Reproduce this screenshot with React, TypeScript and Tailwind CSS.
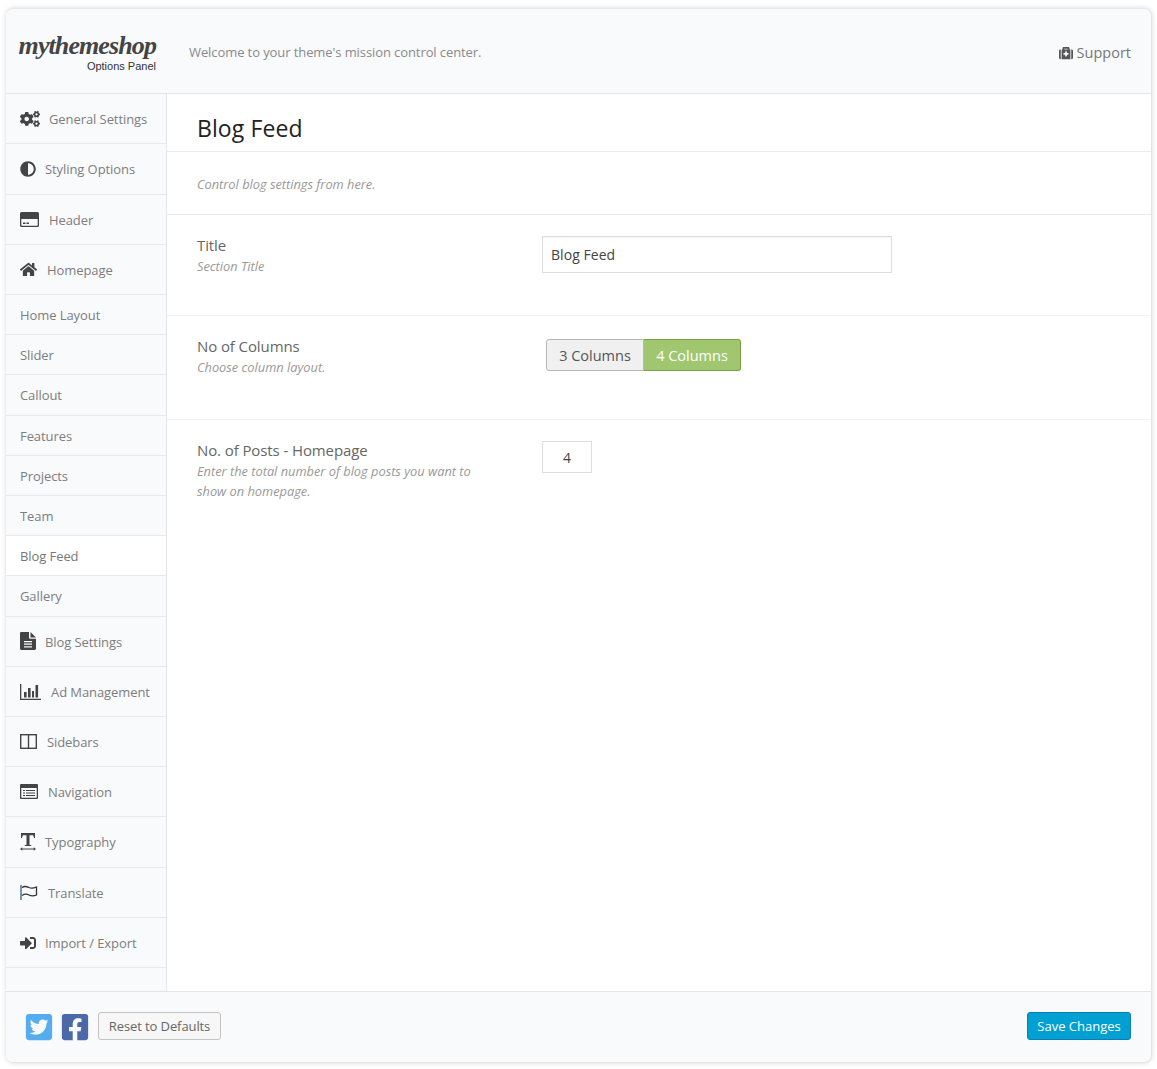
import type { ReactNode } from "react";
import { FaAdjust, FaCogs, FaFacebookSquare, FaHome, FaMedkit, FaSignInAlt, FaTwitterSquare } from "react-icons/fa";

function CardIcon() {
  return (
    <svg width="19" height="15" viewBox="0 0 19 15" fill="#444">
      <path d="M1.500 0h16A1.500 1.500 0 0 1 19 1.500v12a1.500 1.500 0 0 1-1.500 1.500h-16A1.500 1.500 0 0 1 0 13.500v-12A1.500 1.500 0 0 1 1.500 0zM1.300 7v6.300c0 .2.200.4.400.4h15.600c.2 0 .4-.2.400-.4V7z" fillRule="evenodd" />
      <path d="M3 10.500h2.500V12H3zM6.500 10.500H9V12H6.500z" />
    </svg>
  );
}

function DocIcon() {
  return (
    <svg width="16" height="18" viewBox="0 0 16 18" fill="#444">
      <path fillRule="evenodd" d="M0 1.200C0 .5.500 0 1.200 0H9v5.500c0 .8.500 1.300 1.300 1.300H16v10c0 .7-.5 1.200-1.200 1.200H1.200C.5 18 0 17.500 0 16.800zM4 9v1.200h8V9zm0 2.600v1.200h8v-1.200zm0 2.600v1.200h8v-1.200z" />
      <path d="M10.500 0 16 5.400h-5.500z" />
    </svg>
  );
}

function BarsIcon() {
  return (
    <svg width="21" height="16" viewBox="0 0 21 16" fill="#444">
      <path d="M0 0h1.300v14.700H21V16H0z" />
      <path d="M4 8h2.600v5.500H4zM8 4h2.600v9.500H8zM12 7h2v6.500h-2zM15.500 1h2.600v12.500h-2.600z" />
    </svg>
  );
}

function SidebarsIcon() {
  return (
    <svg width="17" height="15" viewBox="0 0 17 15" fill="none" stroke="#444" strokeWidth="1.400">
      <rect x=".7" y=".7" width="15.600" height="13.600" />
      <path d="M8.500 .7v13.600" />
    </svg>
  );
}

function NavIcon() {
  return (
    <svg width="18" height="15" viewBox="0 0 18 15" fill="#444">
      <path fillRule="evenodd" d="M1 0h16a1 1 0 0 1 1 1v13a1 1 0 0 1-1 1H1a1 1 0 0 1-1-1V1a1 1 0 0 1 1-1zm.300 4v9.500c0 .2 0 .3.300.3h14.800c.3 0 .3-.1.300-.3V4z" />
      <path d="M3 6h2v1H3zM6 6h9v1H6zM3 8.500h2v1H3zM6 8.500h9v1H6zM3 11h2v1H3zM6 11h9v1H6z" />
    </svg>
  );
}

function TypeIcon() {
  return (
    <svg width="16" height="18" viewBox="0 0 16 18" fill="#444">
      <path d="M1 0h14v5h-1l-.8-2.800H9.500v9.500l1.800.6v.7H4.700v-.7l1.800-.6V2.200H2.800L2 5H1z" />
      <path d="M0 16l2.300-1.700v1.200h11.400v-1.200L16 16l-2.300 1.700v-1.200H2.300v1.200z" />
    </svg>
  );
}

function FlagIcon() {
  return (
    <svg width="18" height="15" viewBox="0 0 18 15" fill="none">
      <path d="M1 0v15" stroke="#3f6d8c" strokeWidth="1.400" />
      <path d="M2 2.500c3-2 5-1 7 0s4 1 7.500-.5v8c-3.500 1.500-5.500 1-7.500 0s-4-1.500-7 .5" stroke="#333" strokeWidth="1.300" />
    </svg>
  );
}

type Item = { label: string; icon?: ReactNode; gap?: string; active?: boolean };

const items: Item[] = [
  { label: "General Settings", icon: <FaCogs size={20} />, gap: "gap-[9px]" },
  { label: "Styling Options", icon: <FaAdjust size={16} />, gap: "gap-[9px]" },
  { label: "Header", icon: <CardIcon />, gap: "gap-2.5" },
  { label: "Homepage", icon: <FaHome size={17} />, gap: "gap-2.5" },
  { label: "Home Layout" },
  { label: "Slider" },
  { label: "Callout" },
  { label: "Features" },
  { label: "Projects" },
  { label: "Team" },
  { label: "Blog Feed", active: true },
  { label: "Gallery" },
  { label: "Blog Settings", icon: <DocIcon />, gap: "gap-[9px]" },
  { label: "Ad Management", icon: <BarsIcon />, gap: "gap-2.5" },
  { label: "Sidebars", icon: <SidebarsIcon />, gap: "gap-2.5" },
  { label: "Navigation", icon: <NavIcon />, gap: "gap-2.5" },
  { label: "Typography", icon: <TypeIcon />, gap: "gap-[9px]" },
  { label: "Translate", icon: <FlagIcon />, gap: "gap-2.5" },
  { label: "Import / Export", icon: <FaSignInAlt size={16} />, gap: "gap-[9px]" },
];

function Sidebar() {
  return (
    <aside className="w-[161px] shrink-0 bg-[#f9fafc] border-r border-[#e6e6e6]">
      <ul>
        {items.map((item) => (
          <li
            key={item.label}
            className={`flex items-center pl-3.5 pt-[2.25px] border-b border-[#e9e9e9] text-[13px] tracking-[-0.08px] ${
              item.icon ? "h-[50.21px]" : "h-[40.21px]"
            } ${item.active ? "bg-white text-[#777]" : "text-[#7d7d7d]"} ${item.gap ?? ""}`}
          >
            {item.icon && <span className="text-[#444] flex items-center -mt-0.5">{item.icon}</span>}
            <span>{item.label}</span>
          </li>
        ))}
      </ul>
    </aside>
  );
}

export default function App() {
  return (
    <div className="h-[1069px] bg-white pt-2 pl-1.5 pr-[5px] pb-1.5 font-['Open_Sans',sans-serif]">
      <div className="h-full flex flex-col rounded-lg border border-[#e4e4e4] border-l-0 border-t-[#e8e8e8] shadow-[0_0_5px_rgba(0,0,0,0.15)] overflow-hidden bg-white">
        {/* header */}
        <header className="h-[85.21px] shrink-0 flex items-center pl-3 pr-5 pt-1 bg-[#f9fafc] border-b border-[#e6e6e6]">
          <div className="w-[138px] flex flex-col items-end mb-0.5">
            <span className="font-['Liberation_Serif',serif] font-bold italic text-[26px] leading-[28px] tracking-[-0.9px] text-[#444]">
              mythemeshop
            </span>
            <span className="font-['Liberation_Sans',sans-serif] text-[11px] leading-[13px] text-[#333]">Options Panel</span>
          </div>
          <p className="ml-[33px] text-[13px] tracking-[-0.09px] text-[#8a8a8a]">Welcome to your theme's mission control center.</p>
          <a className="ml-auto flex items-center gap-1 text-[14.5px] text-[#777]">
            <FaMedkit size={14} className="text-[#555]" />
            Support
          </a>
        </header>

        <div className="flex-1 flex min-h-0">
          <Sidebar />
          <main className="flex-1 min-w-0">
            <div className="h-[57.8px] flex items-center pl-[30px] pt-[11px] border-b border-[#ececec]">
              <h1 className="text-[23px] font-medium text-[#222] tracking-[0.1px]">Blog Feed</h1>
            </div>
            <div className="h-[63px] flex items-center pl-[30px] pt-1 border-b border-[#ececec]">
              <p className="text-[12.8px] italic text-[#999]">Control blog settings from here.</p>
            </div>

            <section className="h-[101px] flex pl-[30px] pt-[21px] border-b border-[#f1f1f1]">
              <div className="w-[345px] -mt-px">
                <h3 className="text-[15px] leading-5 tracking-[-0.1px] text-[#666]">Title</h3>
                <p className="mt-px text-[12.8px] leading-5 italic text-[#999]">Section Title</p>
              </div>
              <input
                readOnly
                value="Blog Feed"
                className="w-[350px] h-[37px] border border-[#dedede] px-2 text-sm tracking-[0.05px] text-[#444] shadow-[inset_0_1px_2px_rgba(0,0,0,0.05)] outline-none"
              />
            </section>

            <section className="h-[104px] flex pl-[30px] pt-[21px] border-b border-[#f1f1f1]">
              <div className="w-[349px] -mt-px">
                <h3 className="text-[15px] leading-5 tracking-[-0.1px] text-[#666]">No of Columns</h3>
                <p className="mt-px text-[12.8px] leading-5 italic text-[#999]">Choose column layout.</p>
              </div>
              <div className="flex h-8 mt-0.5 text-[14.5px]">
                <button className="w-[98px] pt-px rounded-l-[3px] border border-[#b5b5b5] bg-[#f0f0f0] text-[#555]">3 Columns</button>
                <button className="w-[97px] pt-px rounded-r-[3px] border border-[#7ba043] border-l-0 bg-[#a0c76f] text-white">4 Columns</button>
              </div>
            </section>

            <section className="flex pl-[30px] pt-[21px]">
              <div className="w-[345px] -mt-px">
                <h3 className="text-[15px] leading-5 tracking-[-0.1px] text-[#666]">No. of Posts - Homepage</h3>
                <p className="mt-px w-[280px] text-[12.8px] leading-5 italic text-[#999]">
                  Enter the total number of blog posts you want to show on homepage.
                </p>
              </div>
              <input
                readOnly
                value="4"
                className="w-[50px] h-8 border border-[#dedede] text-center text-sm text-[#444] outline-none"
              />
            </section>
          </main>
        </div>

        {/* footer */}
        <footer className="h-[71px] shrink-0 flex items-center pl-[18px] pr-5 bg-[#f9fafc] border-t border-[#e4e4e4]">
          <FaTwitterSquare size={30} className="text-[#55acee]" />
          <FaFacebookSquare size={30} className="ml-1.5 text-[#4b69a8]" />
          <button className="ml-2 mb-0.5 pt-0.5 h-7 w-[123px] rounded-[3px] border border-[#c4c4c4] bg-[#f7f7f7] text-[13px] tracking-[-0.1px] text-[#666]">
            Reset to Defaults
          </button>
          <button className="ml-auto mb-0.5 pt-0.5 h-7 w-[104px] rounded-[3px] border border-[#0c7db5] bg-[#00a0d2] text-[13px] text-white">
            Save Changes
          </button>
        </footer>
      </div>
    </div>
  );
}
